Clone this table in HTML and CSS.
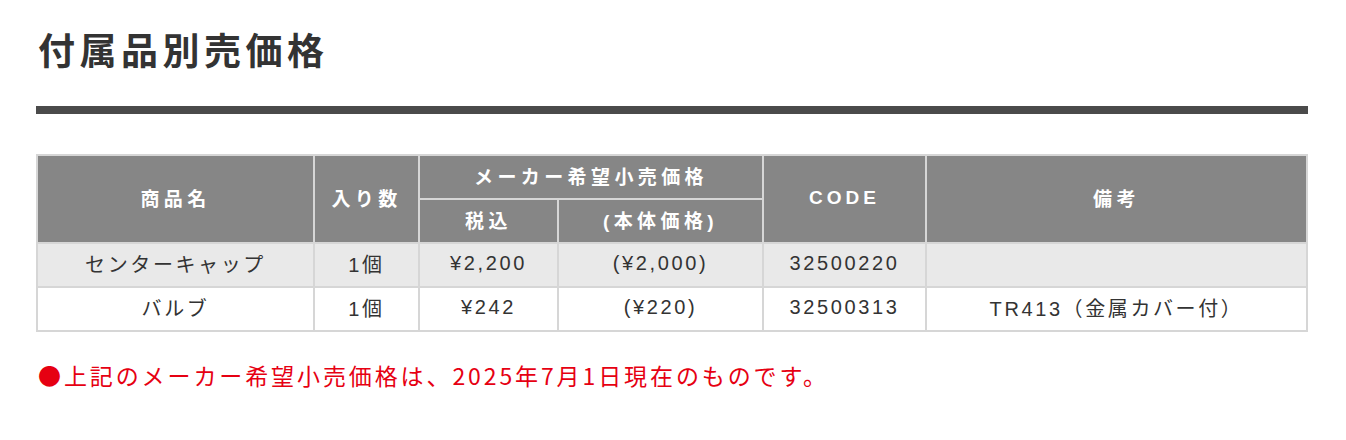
FILE: index.html
```html
<!DOCTYPE html>
<html lang="ja">
<head>
<meta charset="utf-8">
<title>付属品別売価格</title>
<link rel="stylesheet" href="styles.css">
</head>
<body>
<div class="page">
  <h2 class="title">付属品別売価格</h2>
  <div class="rule"></div>
  <table class="price">
    <colgroup>
      <col class="c1"><col class="c2"><col class="c3"><col class="c4"><col class="c5"><col class="c6">
    </colgroup>
    <thead>
      <tr class="h1">
        <th rowspan="2">商品名</th>
        <th rowspan="2">入り数</th>
        <th colspan="2">メーカー希望小売価格</th>
        <th rowspan="2" class="latin">CODE</th>
        <th rowspan="2">備考</th>
      </tr>
      <tr class="h2">
        <th>税込</th>
        <th>(本体価格)</th>
      </tr>
    </thead>
    <tbody>
      <tr class="odd">
        <td>センターキャップ</td>
        <td>1個</td>
        <td>¥2,200</td>
        <td>(¥2,000)</td>
        <td>32500220</td>
        <td></td>
      </tr>
      <tr>
        <td>バルブ</td>
        <td>1個</td>
        <td>¥242</td>
        <td>(¥220)</td>
        <td>32500313</td>
        <td>TR413（金属カバー付）</td>
      </tr>
    </tbody>
  </table>
  <p class="note">●上記のメーカー希望小売価格は、2025年7月1日現在のものです。</p>
</div>
</body>
</html>
```

FILE: styles.css
```css
html, body {
  margin: 0;
  padding: 0;
  background: #fff;
}
body {
  font-family: "Liberation Sans", "Noto Sans CJK JP", sans-serif;
  color: #333;
}
.page {
  width: 1272px;
  margin: 0 0 0 36px;
  padding-top: 28px;
}
.title {
  margin: 0 0 0 2px;
  font-size: 37px;
  line-height: 50px;
  font-weight: bold;
  letter-spacing: 4.5px;
  color: #333;
}
.rule {
  margin-top: 28px;
  height: 8px;
  background: #4b4b4b;
}
.price {
  margin-top: 40px;
  width: 1272px;
  border-collapse: collapse;
  table-layout: fixed;
}
.c1 { width: 277px; }
.c2 { width: 105px; }
.c3 { width: 139px; }
.c4 { width: 205px; }
.c5 { width: 163px; }
.c6 { width: 381px; }
.price th, .price td {
  border: 2px solid #d6d6d6;
  text-align: center;
  padding: 0 0 3px;
}
.price th {
  background: #868686;
  color: #fff;
  font-size: 19px;
  font-weight: bold;
  letter-spacing: 4.4px;
  height: 39px;
}
.price th.latin {
  letter-spacing: 4px;
}
.price td {
  font-size: 20px;
  letter-spacing: 2.6px;
  height: 39px;
  color: #333;
}
.price tr.odd td {
  background: #e9e9e9;
}
.note {
  margin: 27px 0 0 2px;
  font-family: "Noto Sans CJK JP", sans-serif;
  font-size: 23px;
  line-height: 32px;
  color: #e60012;
  letter-spacing: 2.9px;
}
```
